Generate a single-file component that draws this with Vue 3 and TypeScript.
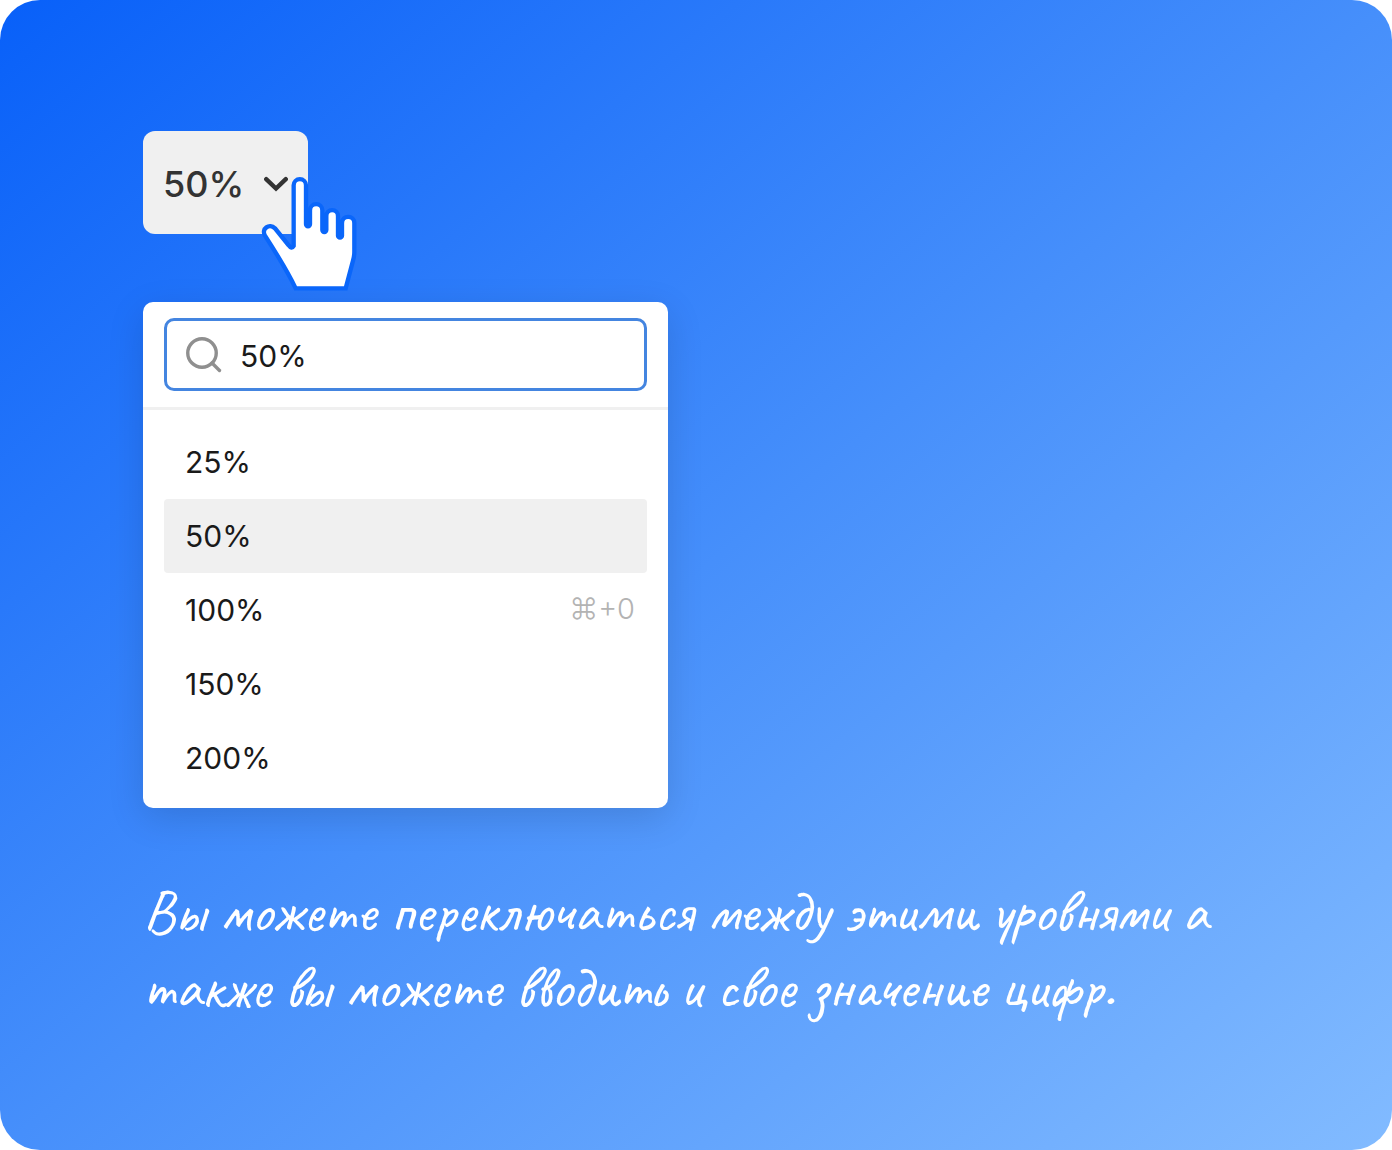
<script setup lang="ts">
import { ref } from 'vue'

interface ZoomLevel {
  label: string
  shortcut?: string
}

const levels: ZoomLevel[] = [
  { label: '25%' },
  { label: '50%' },
  { label: '100%', shortcut: '⌘+0' },
  { label: '150%' },
  { label: '200%' },
]

const current = ref('50%')
const open = ref(true)
</script>

<template>
  <main class="card">
    <button class="trigger" type="button" :aria-expanded="open" @click="open = !open">
      <span>{{ current }}</span>
      <svg class="chevron" viewBox="0 0 24 16" aria-hidden="true">
        <path d="M2.200 3.200 L12 12.500 L21.800 3.200" />
      </svg>
      <svg class="pointer" viewBox="390 160 300 360" aria-hidden="true">
        <path
          d="M491 376 V194 a18.500 18.500 0 0 1 37 0 V311 a6 6 0 0 0 12 0 V269 a18.500 18.500 0 0 1 37 0 V328 a6 6 0 0 0 12 0 V286 a17.500 17.500 0 0 1 35 0 V345 a6 6 0 0 0 12 0 V307 a18.500 18.500 0 0 1 37 0 V394 Q673 406 669 420 L647 503 H497 Q470 446 405 345 C393 324 418 307 435 323 L476 374 Q485 387 491 376 Z"
        />
      </svg>
    </button>

    <section v-if="open" class="panel">
      <div class="search">
        <label class="field">
          <svg class="lens" viewBox="0 0 36 36" aria-hidden="true">
            <circle cx="16" cy="16" r="14.250" />
            <path d="M26 26 L33.500 33.500" />
          </svg>
          <input v-model="current" type="text" aria-label="Масштаб" />
        </label>
      </div>
      <ul class="levels">
        <li v-for="level in levels" :key="level.label">
          <button
            type="button"
            class="level"
            :class="{ active: level.label === current }"
            @click="current = level.label"
          >
            <span>{{ level.label }}</span>
            <kbd v-if="level.shortcut">{{ level.shortcut }}</kbd>
          </button>
        </li>
      </ul>
    </section>

    <p class="note">
      Вы можете переключаться между этими уровнями а также вы можете вводить и свое значение цифр.
    </p>
  </main>
</template>

<style>
body {
  margin: 0;
  background: #fff;
}
</style>

<style scoped>
.card {
  box-sizing: border-box;
  min-height: 100vh;
  padding: 131px 143px 60px;
  border-radius: 40px;
  background: linear-gradient(to bottom right, #0860f9, #468ffb 50%, #82bbff);
  font-family: Inter, 'Liberation Sans', sans-serif;
  color: #1a1a1a;
}

.trigger {
  position: relative;
  display: flex;
  align-items: center;
  justify-content: space-between;
  width: 165px;
  height: 103px;
  padding: 2px 20px 0;
  border: 0;
  border-radius: 12px;
  background: #f0f0f0;
  color: #333;
  font: 500 36px/48px Inter, 'Liberation Sans', sans-serif;
  cursor: pointer;
}

.chevron {
  width: 24px;
  height: 16px;
  fill: none;
  stroke: #333;
  stroke-width: 4.4;
  stroke-linecap: round;
}

.pointer {
  position: absolute;
  top: 43px;
  left: 117px;
  width: 100px;
  height: 120px;
  fill: #fff;
  stroke: #0a66fa;
  stroke-width: 13;
}

.panel {
  box-sizing: border-box;
  width: 525px;
  max-width: 100%;
  margin-top: 68px;
  padding-bottom: 13px;
  border-radius: 10px;
  background: #fff;
  box-shadow: 0 10px 36px rgba(0, 0, 0, 0.13);
}

.search {
  padding: 16px 21px;
  border-bottom: 3px solid #f0f0f0;
}

.field {
  box-sizing: border-box;
  display: flex;
  align-items: center;
  gap: 18px;
  height: 73px;
  padding: 0 19px;
  border: 3px solid #4485e0;
  border-radius: 10px;
}

.lens {
  flex: none;
  width: 36px;
  height: 36px;
  fill: none;
  stroke: #8f8f8f;
  stroke-width: 3.4;
  stroke-linecap: round;
}

.field input {
  flex: 1;
  min-width: 0;
  padding: 2px 0 0;
  border: 0;
  outline: 0;
  background: none;
  color: inherit;
  font: 400 30px/40px Inter, 'Liberation Sans', sans-serif;
}

.levels {
  margin: 0;
  padding: 15px 21px 0;
  list-style: none;
}

.level {
  display: flex;
  align-items: center;
  justify-content: space-between;
  width: 100%;
  height: 74px;
  padding: 0 12px 0 21px;
  border: 0;
  border-radius: 4px;
  background: none;
  color: inherit;
  font: 400 30px/40px Inter, 'Liberation Sans', sans-serif;
  cursor: pointer;
}

.level.active {
  background: #f0f0f0;
}

.level kbd {
  padding-bottom: 2px;
  color: #b3b3b3;
  font: 300 29px/40px Inter, 'Liberation Sans', sans-serif;
}

.note {
  margin: 65px 0 0;
  color: #fff;
  font: 500 60px/76px Caveat, 'Liberation Serif', serif;
}
</style>
